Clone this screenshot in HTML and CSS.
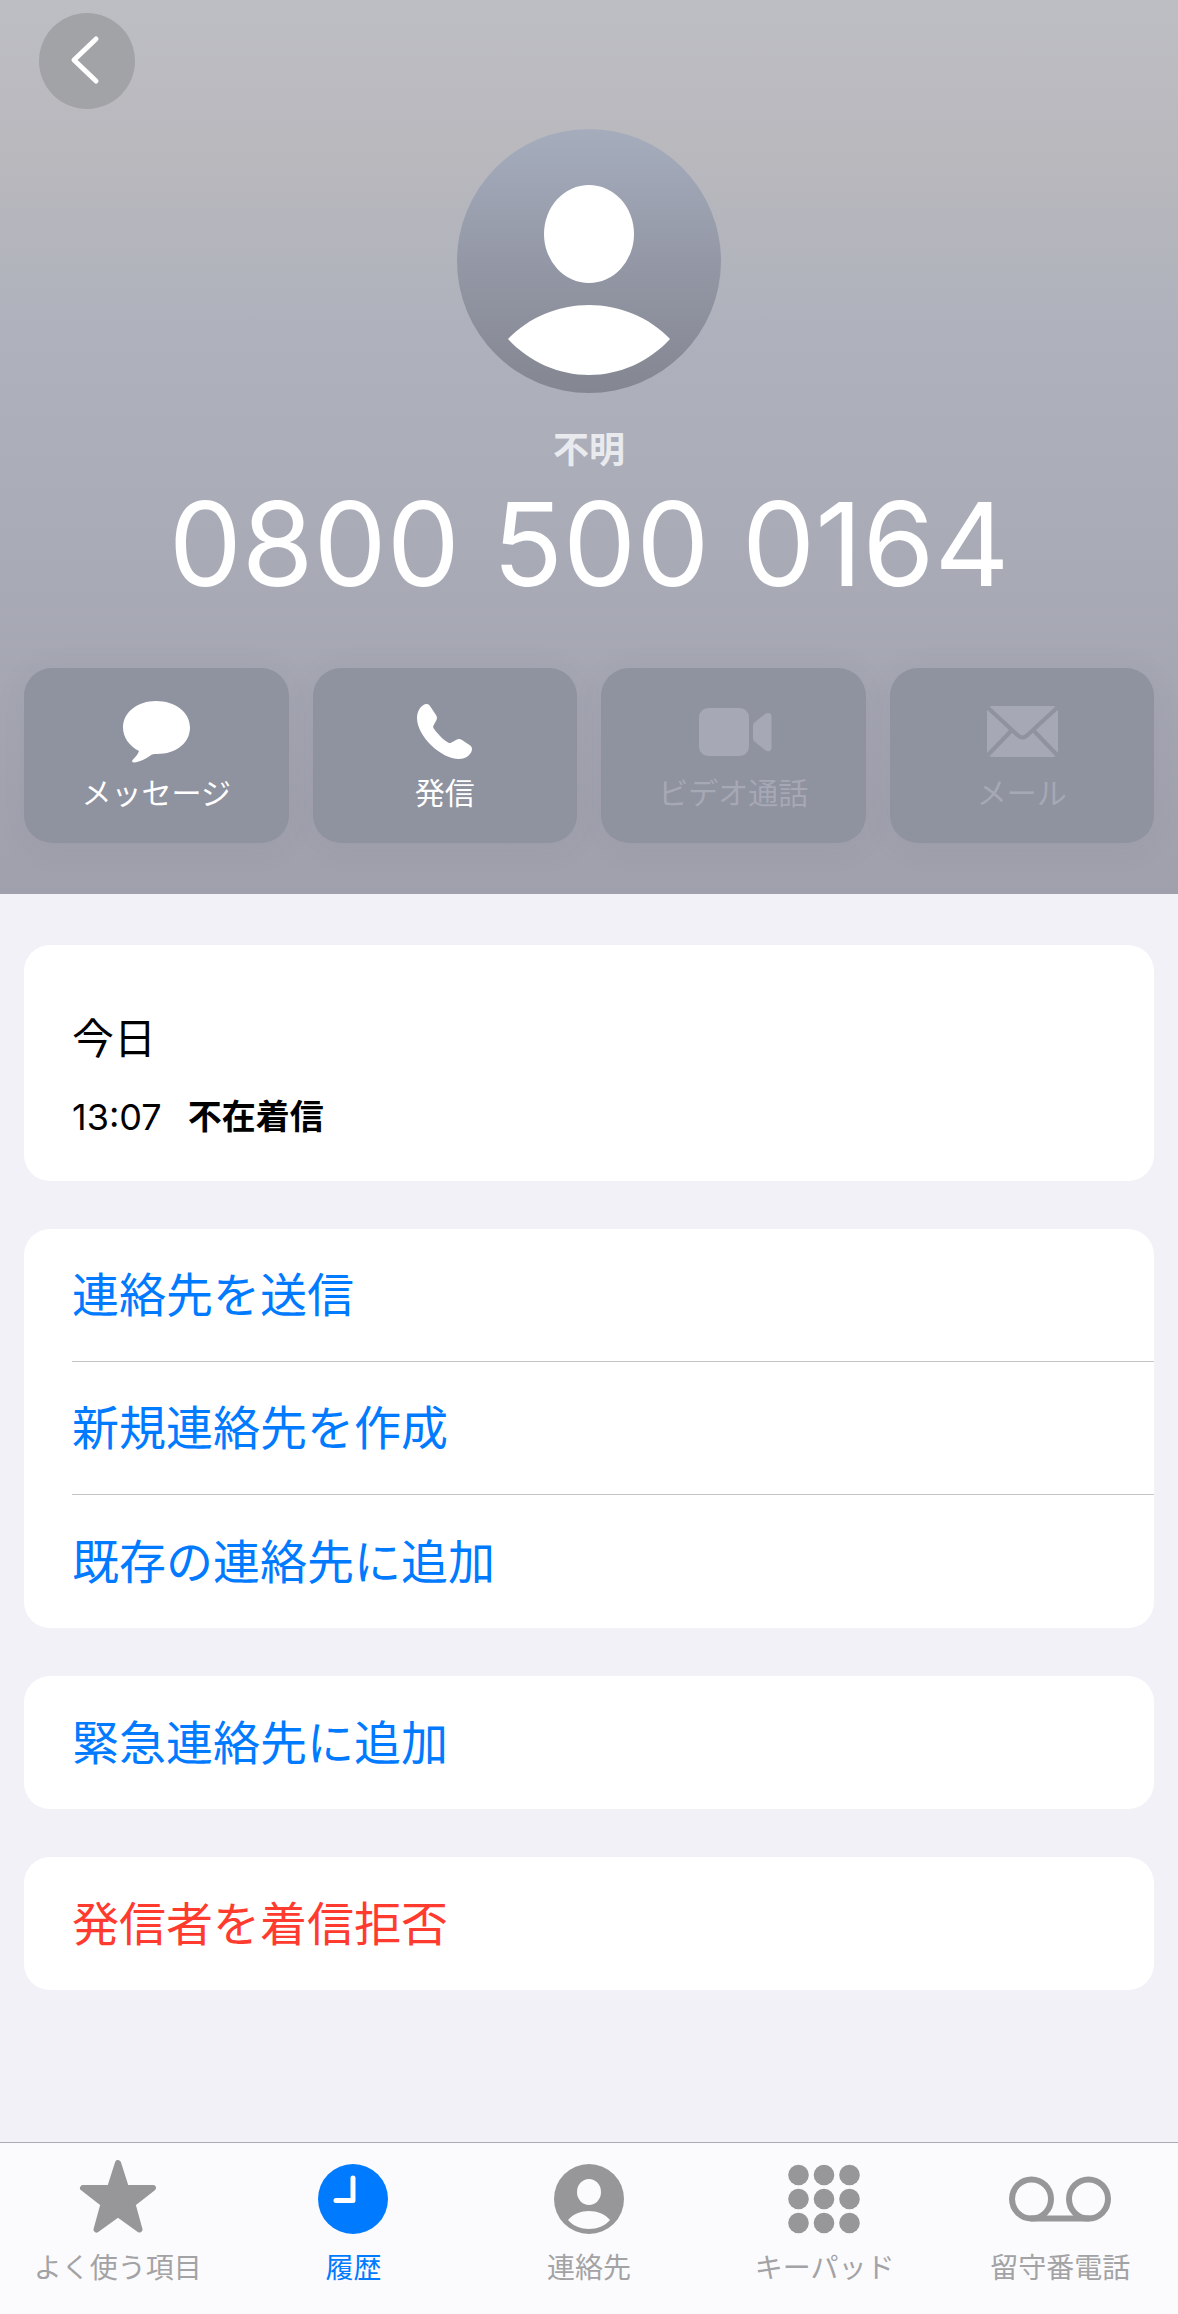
FILE: index.html
```
<!DOCTYPE html>
<html lang="ja">
<head>
    <meta charset="UTF-8">
    <meta name="viewport" content="width=device-width, initial-scale=1.0">
    <title>履歴</title>
    <link rel="stylesheet" href="styles.css">
</head>
<body>
    <header class="caller">
        <button class="back" type="button" aria-label="戻る">
            <svg viewBox="0 0 96 96" aria-hidden="true"><path d="M57 26L35 47L57 68"/></svg>
        </button>
        <svg class="avatar" viewBox="0 0 264 264" aria-hidden="true">
            <defs>
                <linearGradient id="avatar-bg" x1="0" y1="0" x2="0" y2="1">
                    <stop offset="0" stop-color="#a5adbd"/>
                    <stop offset="0.5" stop-color="#9498a6"/>
                    <stop offset="1" stop-color="#848791"/>
                </linearGradient>
            </defs>
            <circle cx="132" cy="132" r="132" fill="url(#avatar-bg)"/>
            <ellipse cx="132" cy="105" rx="45" ry="49" fill="#fff"/>
            <path d="M51 210C72 188 102 176 132 176S192 188 213 210C192 233 162 246 132 246S72 233 51 210Z" fill="#fff"/>
        </svg>
        <p class="caller-name">不明</p>
        <h1 class="caller-number">0800 500 0164</h1>

        <div class="actions">
            <button class="action" type="button">
                <svg viewBox="0 0 80 72" aria-hidden="true">
                    <path d="M40 5C59 5 74 16 74 31.500C74 47 60 58 41 58C39 58 37.500 58 36 58.500C31 62 24 66 18 66.500C16 66.500 15.500 65 17 63.500C20 60.500 22 58 23 55C13 50 7 41 7 31.500C7 16 22 5 40 5Z"/>
                </svg>
                <span>メッセージ</span>
            </button>
            <button class="action" type="button">
                <svg viewBox="0 0 80 72" aria-hidden="true">
                    <path d="M21 8C16 9 12 15 12 22C12 40 36 63 54 63C61 63 67 58 67 53C67 51 66 50 64.500 49L57 44C55 42.600 53 42.800 51 44L46 46.700C45 47.300 44 47 43 46.400C37 43 32 37 28.500 32C28 31 28 30.500 28.500 29.500L31.500 24C32.300 22 32 20.500 31 19L25 10C24 8.400 22.800 7.700 21 8Z"/>
                </svg>
                <span>発信</span>
            </button>
            <button class="action" type="button" disabled>
                <svg viewBox="0 0 80 72" aria-hidden="true">
                    <rect x="6" y="12" width="50" height="48" rx="9"/>
                    <path d="M60 30C60 28.500 60.500 27 62 26L72 18C75 16 78.500 17 78.500 20V52C78.500 55 75 56.500 72 54L62 46C60.500 45 60 43.500 60 42Z"/>
                </svg>
                <span>ビデオ通話</span>
            </button>
            <button class="action" type="button" disabled>
                <svg viewBox="0 0 80 72" aria-hidden="true">
                    <rect x="5" y="10" width="71" height="51" rx="5"/>
                    <path class="fold" d="M4 10L36 39.500Q40.500 43.500 45 39.500L77 10M4 61L30 34M77 61L51 34"/>
                </svg>
                <span>メール</span>
            </button>
        </div>
    </header>

    <main class="content">
        <section class="card history">
            <h2 class="history-day">今日</h2>
            <p class="history-call"><time>13:07</time><strong>不在着信</strong></p>
        </section>

        <section class="card">
            <button class="row" type="button">連絡先を送信</button>
            <button class="row" type="button">新規連絡先を作成</button>
            <button class="row" type="button">既存の連絡先に追加</button>
        </section>

        <section class="card">
            <button class="row" type="button">緊急連絡先に追加</button>
        </section>

        <section class="card">
            <button class="row danger" type="button">発信者を着信拒否</button>
        </section>
    </main>

    <nav class="tabbar">
        <a class="tab" href="#favorites">
            <svg viewBox="0 0 104 76" aria-hidden="true">
                <path class="star" d="M52 3L60 28H87L66.500 44L73.500 69.500L52 54L30.500 69.500L37.500 44L17 28H44Z"/>
            </svg>
            <span>よく使う項目</span>
        </a>
        <a class="tab active" href="#recents">
            <svg viewBox="0 0 104 76" aria-hidden="true">
                <circle cx="52" cy="39" r="35"/>
                <path class="hands" d="M52 18V40.500H35"/>
            </svg>
            <span>履歴</span>
        </a>
        <a class="tab" href="#contacts">
            <svg viewBox="0 0 104 76" aria-hidden="true">
                <circle cx="52" cy="39" r="35"/>
                <ellipse class="cutout" cx="52" cy="32" rx="12" ry="13"/>
                <path class="cutout" d="M31 60C36 54 44 51 52 51S68 54 73 60C68 66 60 69 52 69S36 66 31 60Z"/>
            </svg>
            <span>連絡先</span>
        </a>
        <a class="tab" href="#keypad">
            <svg viewBox="0 0 104 76" aria-hidden="true">
                <circle cx="25.500" cy="15" r="10.300"/><circle cx="51" cy="15" r="10.300"/><circle cx="76.500" cy="15" r="10.300"/>
                <circle cx="25.500" cy="39" r="10.300"/><circle cx="51" cy="39" r="10.300"/><circle cx="76.500" cy="39" r="10.300"/>
                <circle cx="25.500" cy="63" r="10.300"/><circle cx="51" cy="63" r="10.300"/><circle cx="76.500" cy="63" r="10.300"/>
            </svg>
            <span>キーパッド</span>
        </a>
        <a class="tab" href="#voicemail">
            <svg viewBox="0 0 104 76" aria-hidden="true">
                <g class="reels">
                    <circle cx="23.500" cy="39" r="19.500"/>
                    <circle cx="80.500" cy="39" r="19.500"/>
                    <path d="M23.500 58.500H80.500"/>
                </g>
            </svg>
            <span>留守番電話</span>
        </a>
    </nav>
</body>
</html>
```
FILE: styles.css
```
* {
    box-sizing: border-box;
}
body {
    margin: 0;
    min-height: 100vh;
    display: flex;
    flex-direction: column;
    background-color: #f2f1f8;
    color: #000;
    font-family: Inter, "Noto Sans CJK JP", sans-serif;
}
button {
    border: none;
    padding: 0;
    font-family: inherit;
    cursor: pointer;
}
h1, h2, p {
    margin: 0;
    font-weight: 400;
}

/* Caller header */
.caller {
    display: flex;
    flex-direction: column;
    align-items: center;
    padding: 13px 24px 51px;
    background: linear-gradient(#bdbec3 0%, #b8b8bd 18%, #afb2bc 36%, #a9abb7 60%, #9fa0ac 100%);
    color: #fff;
}
.back {
    align-self: flex-start;
    width: 96px;
    height: 96px;
    margin-left: 15px;
    border-radius: 50%;
    background-color: #a2a3a7;
}
.back svg {
    display: block;
    fill: none;
    stroke: #fff;
    stroke-width: 5;
    stroke-linecap: round;
    stroke-linejoin: round;
}
.avatar {
    width: 264px;
    height: 264px;
    margin-top: 20px;
}
.caller-name {
    margin-top: 33px;
    font-size: 36px;
    line-height: 48px;
    font-weight: 700;
    color: #e9eaee;
}
.caller-number {
    font-size: 116px;
    line-height: 140px;
}
.actions {
    align-self: stretch;
    display: grid;
    grid-template-columns: repeat(4, 1fr);
    gap: 24px;
    margin-top: 54px;
}
.action {
    display: flex;
    flex-direction: column;
    align-items: center;
    gap: 5px;
    padding: 28px 0 30px;
    border-radius: 28px;
    background-color: #8f929f;
    box-shadow: 0 4px 36px rgba(60, 64, 80, 0.05);
    color: #fff;
    font-size: 30px;
    line-height: 40px;
}
.action svg {
    width: 80px;
    height: 72px;
    fill: currentColor;
}
.action:disabled {
    color: #a6a8b5;
    cursor: default;
}
.fold {
    fill: none;
    stroke: #8f929f;
    stroke-width: 4;
}

/* Cards */
.content {
    display: flex;
    flex-direction: column;
    gap: 48px;
    padding: 51px 24px;
}
.card {
    border-radius: 26px;
    background-color: #fff;
    overflow: hidden;
}
.history {
    padding: 67px 48px 40px;
}
.history-day {
    font-size: 42px;
    line-height: 54px;
}
.history-call {
    display: flex;
    gap: 26px;
    margin-top: 27px;
    font-size: 34px;
    line-height: 48px;
}
.history-call time {
    font-size: 36px;
}
.row {
    display: block;
    width: calc(100% - 48px);
    height: 133px;
    margin-left: 48px;
    border-bottom: 1px solid #c4c4c7;
    background: none;
    color: #007aff;
    font-size: 47px;
    line-height: 60px;
    text-align: left;
}
.row:last-child {
    border-bottom: none;
}
.row.danger {
    color: #ff3b30;
}

/* Tab bar */
.tabbar {
    display: grid;
    grid-template-columns: repeat(5, 1fr);
    margin-top: auto;
    padding: 17px 0 29px;
    border-top: 1px solid #a9abb6;
    background-color: #fbfbfe;
}
.tab {
    display: flex;
    flex-direction: column;
    align-items: center;
    gap: 15px;
    color: #a3a3a5;
    font-size: 28px;
    line-height: 34px;
    text-decoration: none;
}
.tab svg {
    width: 104px;
    height: 76px;
    fill: #979799;
}
.tab.active {
    color: #007aff;
}
.tab.active svg {
    fill: #007aff;
}
.tab .star {
    stroke: #979799;
    stroke-width: 6;
    stroke-linejoin: round;
}
.tab .hands {
    fill: none;
    stroke: #fff;
    stroke-width: 5;
    stroke-linecap: round;
    stroke-linejoin: round;
}
.tab .cutout {
    fill: #fbfbfe;
}
.tab .reels {
    fill: none;
    stroke: #979799;
    stroke-width: 6;
    stroke-linecap: round;
}
```
